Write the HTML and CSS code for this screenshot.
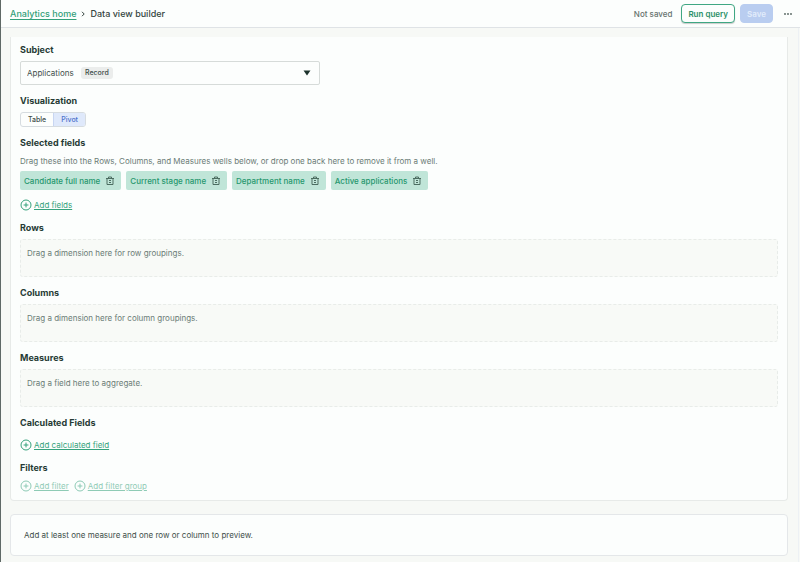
FILE: index.html
```html
<!DOCTYPE html>
<html lang="en">
<head>
  <meta charset="UTF-8" />
  <title>Data view builder</title>
  <link rel="stylesheet" href="styles.css">
</head>
<body>
  <svg class="sprite" aria-hidden="true">
    <symbol id="plus" viewBox="0 0 12 12">
      <circle cx="6" cy="6" r="5" />
      <path d="M6 3.6v4.8M3.6 6h4.8" />
    </symbol>
    <symbol id="trash" viewBox="0 0 10 10">
      <path d="M1 2.5h8M3.5 2V1h3v1M2 2.5v6h6v-6M4 4.5h2M4 6.5h2" />
    </symbol>
  </svg>

  <header class="topbar">
    <nav class="crumbs">
      <a href="#">Analytics home</a>
      <svg class="chevron" viewBox="0 0 4 6"><path d="M1 0.8l2.2 2.2L1 5.2" /></svg>
      <span>Data view builder</span>
    </nav>
    <div class="actions">
      <span class="status">Not saved</span>
      <button class="btn btn-outline" type="button">Run query</button>
      <button class="btn btn-save" type="button" disabled>Save</button>
      <button class="more" type="button" aria-label="More options">
        <svg viewBox="0 0 8 2"><circle cx="1" cy="1" r="0.9" /><circle cx="4" cy="1" r="0.9" /><circle cx="7" cy="1" r="0.9" /></svg>
      </button>
    </div>
  </header>

  <main class="content">
    <div class="panel">
      <section>
        <h2><label for="subject">Subject</label></h2>
        <div class="select-wrap">
          <select id="subject">
            <option>Applications</option>
          </select>
          <span class="badge">Record</span>
          <svg class="caret" viewBox="0 0 8 6"><path d="M0.5 0.5h7L4 5.5z" /></svg>
        </div>
      </section>

      <section>
        <h2>Visualization</h2>
        <div class="toggle">
          <input type="radio" name="viz" id="viz-table">
          <label for="viz-table">Table</label>
          <input type="radio" name="viz" id="viz-pivot" checked>
          <label for="viz-pivot">Pivot</label>
        </div>
      </section>

      <section>
        <h2>Selected fields</h2>
        <p class="help">Drag these into the Rows, Columns, and Measures wells below, or drop one back here to remove it from a well.</p>
        <ul class="chips">
          <li>Candidate full name <button type="button" aria-label="Remove Candidate full name"><svg><use href="#trash" /></svg></button></li>
          <li>Current stage name <button type="button" aria-label="Remove Current stage name"><svg><use href="#trash" /></svg></button></li>
          <li>Department name <button type="button" aria-label="Remove Department name"><svg><use href="#trash" /></svg></button></li>
          <li>Active applications <button type="button" aria-label="Remove Active applications"><svg><use href="#trash" /></svg></button></li>
        </ul>
        <div class="links spaced">
          <a href="#"><svg><use href="#plus" /></svg><span>Add fields</span></a>
        </div>
      </section>

      <section>
        <h2>Rows</h2>
        <div class="well">Drag a dimension here for row groupings.</div>
      </section>

      <section>
        <h2>Columns</h2>
        <div class="well">Drag a dimension here for column groupings.</div>
      </section>

      <section>
        <h2>Measures</h2>
        <div class="well">Drag a field here to aggregate.</div>
      </section>

      <section>
        <h2>Calculated Fields</h2>
        <div class="links spaced">
          <a href="#"><svg><use href="#plus" /></svg><span>Add calculated field</span></a>
        </div>
      </section>

      <section>
        <h2>Filters</h2>
        <div class="links muted">
          <a href="#"><svg><use href="#plus" /></svg><span>Add filter</span></a>
          <a href="#"><svg><use href="#plus" /></svg><span>Add filter group</span></a>
        </div>
      </section>
    </div>

    <div class="preview">Add at least one measure and one row or column to preview.</div>
  </main>
</body>
</html>
```

FILE: styles.css
```css
* { box-sizing: border-box; }

body {
  margin: 0;
  min-height: 100vh;
  border-left: 1px solid #5f6966;
  background: #f7f9f6;
  color: #3f4f4a;
  font-family: Inter, "Liberation Sans", sans-serif;
  font-size: 8px;
  line-height: 14px;
}

button, select {
  font: inherit;
  color: inherit;
}

h2, p, ul {
  margin: 0;
  padding: 0;
}

svg {
  display: block;
  fill: none;
  stroke: currentColor;
}

.sprite {
  position: absolute;
  width: 0;
  height: 0;
}

.topbar {
  display: flex;
  align-items: center;
  justify-content: space-between;
  height: 28px;
  padding: 0 6px 0 9px;
  background: #fcfefd;
  border-bottom: 1px solid #dfe3e6;
}

.crumbs {
  display: flex;
  align-items: center;
  gap: 5px;
  font-size: 9px;
  font-weight: 500;
  color: #34443f;
}

.crumbs a {
  color: #34a079;
  text-underline-offset: 2px;
}

.chevron {
  width: 4px;
  height: 6px;
}

.actions {
  display: flex;
  align-items: center;
  gap: 5px;
}

.status {
  margin-right: 4px;
  font-weight: 500;
  color: #66736f;
}

.btn {
  height: 19px;
  padding: 0 6px;
  border: 1px solid #3fa783;
  border-radius: 4px;
  font-weight: 600;
  line-height: 16px;
}

.btn-outline {
  background: #fcfefd;
  color: #2b9069;
  box-shadow: 0 1px 1px rgba(0, 0, 0, 0.2);
}

.btn-save {
  background: #b9cdf0;
  border-color: #b9cdf0;
  color: #e2ecfb;
}

.more {
  margin-left: 4px;
  padding: 2px;
  border: 0;
  background: none;
}

.more svg {
  width: 8px;
  height: 2px;
  fill: #53625d;
  stroke: none;
}

.content {
  margin-right: 1px;
  padding: 9px 10px 7px 9px;
  border-right: 1px solid #edf1f4;
}

.panel {
  display: flex;
  flex-direction: column;
  gap: 9px;
  padding: 6px 9px 7px;
  background: #fcfefd;
  border: 1px solid #e7eae8;
  border-top: 0;
  border-radius: 0 0 4px 4px;
}

h2 {
  margin-bottom: 4px;
  font-size: 9px;
  font-weight: 700;
  line-height: 14px;
  color: #263b35;
}

.select-wrap {
  position: relative;
  width: 300px;
  max-width: 100%;
}

.select-wrap select {
  display: block;
  width: 100%;
  height: 24px;
  padding: 0 6px;
  appearance: none;
  background: #fcfefd;
  border: 1px solid #d6dbd9;
  border-radius: 2px;
}

.badge {
  position: absolute;
  top: 6px;
  left: 61px;
  padding: 0 4px;
  border-radius: 3px;
  background: #ebedec;
  font-size: 7px;
  font-weight: 500;
  line-height: 12px;
  pointer-events: none;
}

.caret {
  position: absolute;
  top: 9px;
  right: 9px;
  width: 8px;
  height: 6px;
  fill: #1d332c;
  stroke: none;
  pointer-events: none;
}

.toggle {
  display: inline-flex;
  height: 15px;
  border: 1px solid #d6dce0;
  border-radius: 3px;
  overflow: hidden;
  vertical-align: top;
}

.toggle input {
  position: absolute;
  opacity: 0;
}

.toggle label {
  padding: 0 7px;
  font-size: 7px;
  font-weight: 500;
}

.toggle input:checked + label {
  background: #dfe9fb;
  color: #4c73cc;
  border-left: 1px solid #c8d6f2;
}

.help {
  margin-bottom: 3px;
  color: #6b7c76;
}

.chips {
  display: flex;
  flex-wrap: wrap;
  gap: 5px;
  list-style: none;
}

.chips li {
  display: flex;
  align-items: center;
  gap: 5px;
  height: 19px;
  padding: 0 6px 0 4px;
  border-radius: 2px;
  background: #c0e5d8;
  color: #26976e;
  font-weight: 500;
}

.chips button {
  padding: 0;
  border: 0;
  background: none;
  color: #4c6d61;
}

.chips svg {
  width: 10px;
  height: 10px;
}

.links {
  display: flex;
  flex-wrap: wrap;
  gap: 5px;
}

.links.spaced {
  margin-top: 8px;
}

.links a {
  display: flex;
  align-items: center;
  gap: 2px;
  color: #35a27c;
  text-decoration: none;
}

.links span {
  text-decoration: underline;
  text-underline-offset: 1px;
}

.links svg {
  width: 12px;
  height: 12px;
}

.muted {
  opacity: 0.55;
}

.well {
  height: 38px;
  padding: 6px;
  background: #f8faf7;
  border: 1px dashed #e8ece9;
  border-radius: 3px;
  color: #6b7c76;
}

.preview {
  margin-top: 13px;
  padding: 13px;
  background: #fcfefd;
  border: 1px solid #e4e7e9;
  border-radius: 4px;
}
```
